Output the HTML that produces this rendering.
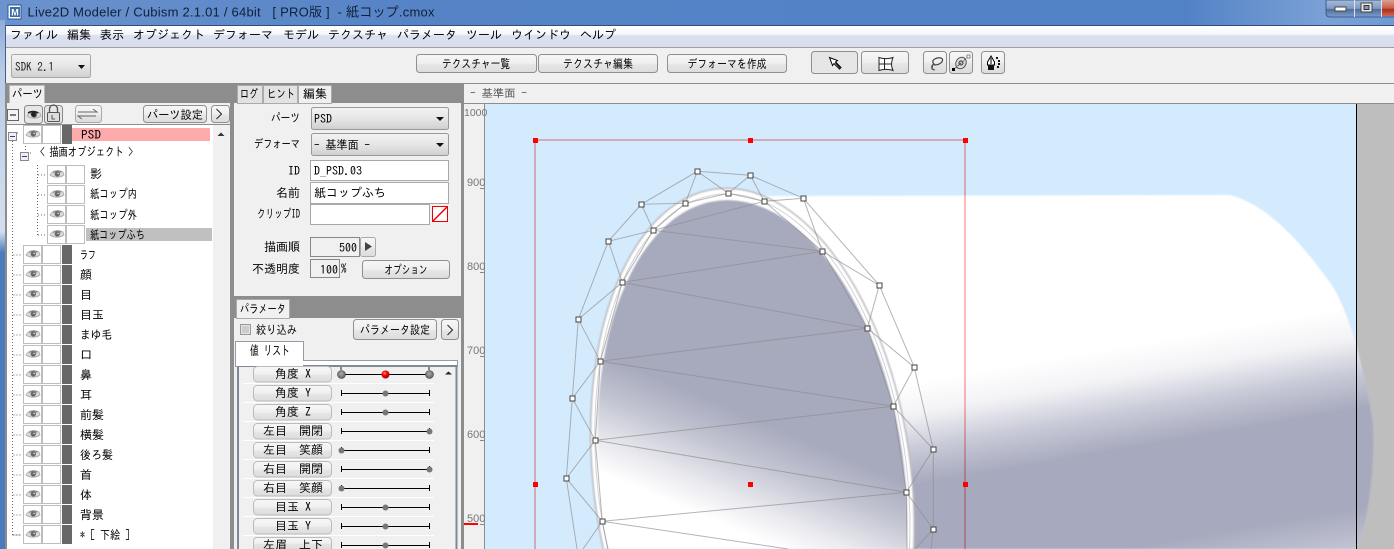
<!DOCTYPE html>
<html><head><meta charset="utf-8"><title>Live2D Modeler</title>
<style>
html,body{margin:0;padding:0;width:1394px;height:549px;overflow:hidden;background:#f0f0f0}
svg{display:block}
text{font-family:"IPAGothic","Liberation Sans","Noto Sans CJK JP",sans-serif;font-size:12px;fill:#000;white-space:pre}
.ttl{font-family:"Liberation Sans","Noto Sans CJK JP",sans-serif;font-size:13px;fill:#10203a}
.m{text-anchor:middle}.e{text-anchor:end}
.c{shape-rendering:crispEdges}
.g{fill:#777;font-size:11px;font-family:"Liberation Sans",sans-serif}
</style></head><body>
<svg width="1394" height="549" viewBox="0 0 1394 549" xmlns="http://www.w3.org/2000/svg">
<defs>
<linearGradient id="tb" x1="0" y1="0" x2="1" y2="0"><stop offset="0" stop-color="#6c93cd"/><stop offset=".3" stop-color="#5583c6"/><stop offset=".85" stop-color="#5282c6"/><stop offset=".95" stop-color="#7ba1d6"/><stop offset="1" stop-color="#7199d2"/></linearGradient>
<linearGradient id="side" x1="0" y1="0" x2="0" y2="1"><stop offset="0" stop-color="#8fadd8"/><stop offset=".1" stop-color="#b9cce6"/><stop offset=".4" stop-color="#d3dfef"/><stop offset=".44" stop-color="#4a7bbd"/><stop offset="1" stop-color="#4a7bbf"/></linearGradient>
<linearGradient id="mn" x1="0" y1="0" x2="0" y2="1"><stop offset="0" stop-color="#fff"/><stop offset=".4" stop-color="#f4f6fb"/><stop offset=".45" stop-color="#dce1f1"/><stop offset="1" stop-color="#d8ddee"/></linearGradient>
<linearGradient id="bt" x1="0" y1="0" x2="0" y2="1"><stop offset="0" stop-color="#f7f7f7"/><stop offset=".5" stop-color="#efefef"/><stop offset=".55" stop-color="#e6e6e6"/><stop offset="1" stop-color="#dcdcdc"/></linearGradient>
<linearGradient id="sel" x1="0" y1="0" x2="0" y2="1"><stop offset="0" stop-color="#f3f3f3"/><stop offset=".5" stop-color="#e6e6e6"/><stop offset="1" stop-color="#cfcfcf"/></linearGradient>
<linearGradient id="wb" x1="0" y1="0" x2="0" y2="1"><stop offset="0" stop-color="#a9bcd8"/><stop offset=".5" stop-color="#7f9ac4"/><stop offset=".55" stop-color="#4f6d9c"/><stop offset="1" stop-color="#7d9fcc"/></linearGradient>
<linearGradient id="wr" x1="0" y1="0" x2="0" y2="1"><stop offset="0" stop-color="#dba08f"/><stop offset=".5" stop-color="#c9604b"/><stop offset=".6" stop-color="#b02a1a"/><stop offset="1" stop-color="#c96a55"/></linearGradient>
<linearGradient id="body" gradientUnits="userSpaceOnUse" x1="1000" y1="367" x2="1044" y2="623"><stop offset="0" stop-color="#fff"/><stop offset=".12" stop-color="#f3f3f6"/><stop offset=".25" stop-color="#c9cbd8"/><stop offset=".39" stop-color="#a7aabe"/><stop offset=".77" stop-color="#a7aabe"/><stop offset="1" stop-color="#d0d2de"/></linearGradient>
<linearGradient id="inner" gradientUnits="userSpaceOnUse" x1="640" y1="370" x2="597" y2="471" gradientTransform="matrix(1 0 -0.089 1 -709.68 -480)"><stop offset="0" stop-color="#a7aabd"/><stop offset=".35" stop-color="#c2c4d1"/><stop offset=".75" stop-color="#ebebf0"/><stop offset="1" stop-color="#fff"/></linearGradient>
<radialGradient id="rk" cx=".4" cy=".35" r=".7"><stop offset="0" stop-color="#ff9a9a"/><stop offset=".4" stop-color="#f00"/><stop offset="1" stop-color="#900"/></radialGradient>
<radialGradient id="gk" cx=".45" cy=".4" r=".7"><stop offset="0" stop-color="#aaa"/><stop offset="1" stop-color="#555"/></radialGradient>
<filter id="bl" x="-5%" y="-5%" width="110%" height="110%"><feGaussianBlur stdDeviation=".8"/></filter>
<g id="eye"><path d="M1 6C3 2 8 0 14 3L15 6C11 9 5 9 1 6Z" fill="#d8d8d8" stroke="#aaa" stroke-width=".8"/><path d="M4 3C7 1 10 1 13 3L10 4C8 3 6 3 4 4Z" fill="#8a8a8a"/><circle cx="8.3" cy="5" r="2.6" fill="#666"/><circle cx="9" cy="4.4" r=".8" fill="#ddd"/></g>
<g id="cells"><rect class="c" x=".5" y=".5" width="18" height="18" fill="#fff" stroke="#bdbdbd"/><rect class="c" x="19.5" y=".5" width="18" height="18" fill="#fff" stroke="#bdbdbd"/><use href="#eye" x="2" y="4"/></g>
<g id="top"><use href="#cells" x="23"/><rect class="c" x="62" y="0" width="10" height="19" fill="#686868"/><path d="M13.5 10h8" stroke="#666" stroke-dasharray="1 2" class="c"/></g>
<g id="kid"><use href="#cells" x="47"/><path d="M38 10h8" stroke="#666" stroke-dasharray="1 2" class="c"/></g>
<g id="tr"><path class="c" d="M341.5 -3v6M429.5 -3v6M341 .5h89" stroke="#000" fill="none"/></g>
<g id="kn"><circle r="3" fill="#777"/></g>
<g id="hd"><rect class="c" x="-2.5" y="-2.5" width="5" height="5" fill="#fff" stroke="#444"/></g>
</defs>

<!-- window frame -->
<rect width="1394" height="26" fill="url(#tb)" class="c"/>
<rect y="20" width="5" height="529" fill="url(#side)" class="c"/>
<rect x="5" y="25" width="1389" height="1" fill="#2d4f80" class="c"/>
<rect x="5" y="26" width="1389" height="21" fill="url(#mn)" class="c"/>
<rect x="5" y="47" width="1389" height="1" fill="#a0a0a0" class="c"/>
<rect x="5" y="48" width="1389" height="35" fill="#f0f0f0" class="c"/>
<rect x="5" y="25" width="1" height="524" fill="#3f5f8f" class="c"/>

<!-- title -->
<rect x="8" y="5" width="13" height="14" fill="#fff" stroke="#2b5797" class="c"/>
<rect x="10" y="7" width="10" height="10" fill="#3a6ea8" class="c"/>
<text x="15" y="15.5" class="m" style="font-size:9px;font-weight:bold;font-family:'Liberation Sans';fill:#fff">M</text>
<text class="ttl" x="27.5" y="16.5" textLength="407" lengthAdjust="spacing">Live2D Modeler / Cubism 2.1.01 / 64bit   [ PRO版 ]  - 紙コップ.cmox</text>
<!-- window buttons -->
<path d="M1326 0V13Q1326 17 1330 17H1394V0Z" fill="url(#wb)" stroke="#3d5f92"/>
<rect x="1382" y="0" width="12" height="16" fill="url(#wr)" class="c"/>
<path class="c" d="M1354.5 0V17M1381.5 0V17" stroke="#d8e2f0"/>
<rect x="1335" y="7" width="11" height="4" fill="#fff" stroke="#444" stroke-width=".6" class="c"/>
<rect x="1361" y="3" width="11" height="9" fill="#e8e8e8" stroke="#444" stroke-width=".6" class="c"/>
<rect x="1364" y="5.5" width="5" height="4" fill="#7f9ac4" stroke="#333" stroke-width=".6" class="c"/>

<!-- menu -->
<g>
<text x="10" y="39">ファイル</text><text x="67" y="39">編集</text><text x="100" y="39">表示</text><text x="133" y="39">オブジェクト</text><text x="213" y="39">デフォーマ</text><text x="283" y="39">モデル</text><text x="328" y="39">テクスチャ</text><text x="397" y="39">パラメータ</text><text x="466" y="39">ツール</text><text x="511" y="39">ウインドウ</text><text x="580" y="39">ヘルプ</text>
</g>

<!-- toolbar -->
<rect class="c" x="11.5" y="54.5" width="79" height="23" rx="2" fill="url(#sel)" stroke="#a8a8a8"/>
<text x="15" y="71" textLength="39" lengthAdjust="spacingAndGlyphs" style="fill:#222">SDK 2.1</text><path d="M78 65h7l-3.500 4z" fill="#111"/>
<g fill="url(#bt)" stroke="#8f8f8f">
<rect x="416.500" y="54.500" width="120" height="18" rx="3"/><rect x="538.500" y="54.500" width="119" height="18" rx="3"/><rect x="667.500" y="54.500" width="119" height="18" rx="3"/>
<rect x="811.500" y="51.500" width="46" height="22" rx="3" fill="#e6e6e6"/><rect x="861.500" y="51.500" width="47" height="22" rx="3"/>
<rect x="923.500" y="51.500" width="23" height="22" rx="3"/><rect x="949.500" y="51.500" width="23" height="22" rx="3"/><rect x="981.500" y="51.500" width="23" height="22" rx="3"/>
</g>
<text x="476" y="68" class="m" textLength="68" lengthAdjust="spacingAndGlyphs">テクスチャ一覧</text><text x="598" y="68" class="m" textLength="70" lengthAdjust="spacingAndGlyphs">テクスチャ編集</text><text x="727" y="68" class="m" textLength="79" lengthAdjust="spacingAndGlyphs">デフォーマを作成</text>
<path d="M829.500 57.500l3 8 1.500-2 5.500 5.500 1.500-1.500-5.500-5.500 2-1.500z" fill="#fff" stroke="#000"/><path d="M835 63l4.500 5 1-1-4.500-5z" fill="#000"/>
<path d="M879 57.500C883 59 889 59 893 57.500C891 63 891 66 893 70.500C889 69 883 69 879 70.500ZM884.500 58.500V69.500M879 64H892" fill="#fff" stroke="#222"/>
<path d="M934 70C930 68 932 65 934 64C930 60 937 57 941 58C945 60 941 65 934 65" fill="none" stroke="#444" stroke-width="1.200"/><path d="M933 64l-1 5 3 1" fill="none" stroke="#555"/>
<ellipse cx="961" cy="63" rx="5" ry="6" transform="rotate(30 961 63)" fill="#ddd" stroke="#555"/><circle cx="961" cy="63" r="2" fill="none" stroke="#333"/><path d="M953 70L969 56" stroke="#555" fill="none" stroke-dasharray="2 1"/><rect x="952" y="68" width="3" height="3" fill="#000"/><rect x="967" y="55" width="3" height="3" fill="#fff" stroke="#444" stroke-width=".6"/>
<path d="M991 56l3.500 6v3h-7v-3zM991 58v6" fill="#fff" stroke="#000"/><rect x="988" y="65" width="6" height="5" fill="#111"/><path class="c" d="M997 57v2M999 60v2M999 63v2M998 66v2" stroke="#111" stroke-width="2"/>

<!-- left panel -->
<rect x="5" y="83" width="1389" height="1" fill="#8d8d8d" class="c"/>
<rect x="5" y="84" width="229" height="19" fill="#8d8d8d" class="c"/>
<rect x="6" y="103" width="224" height="446" fill="#f0f0f0" class="c"/>
<rect x="5" y="84" width="2" height="465" fill="#8c8c8c" class="c"/>
<rect x="230" y="84" width="4" height="465" fill="#8d8d8d" class="c"/>
<path class="c" d="M9.500 103V85.500H44.500V103" fill="#f0f0f0" stroke="#bbb"/>
<text x="12" y="98" textLength="31" lengthAdjust="spacingAndGlyphs">パーツ</text>
<rect class="c" x="7.500" y="109.500" width="11" height="11" fill="#f4f4f4" stroke="#666"/><path class="c" d="M10 115h6" stroke="#000"/>
<rect x="24.500" y="105.500" width="18" height="18" rx="3" fill="#e6e6e6" stroke="#888"/><use href="#eye" x="26" y="110"/><path d="M28 113c3-2 7-2 10 0" stroke="#222" stroke-width="1.500" fill="none"/><circle cx="33.500" cy="114.500" r="2.500" fill="#222"/>
<rect x="44.500" y="105.500" width="18" height="18" rx="3" fill="#e6e6e6" stroke="#888"/><rect x="47.500" y="112.500" width="12" height="9" rx="1" fill="#ddd" stroke="#555"/><path d="M49.500 112v-3a4 4 0 0 1 8 0v3" fill="none" stroke="#555" stroke-width="1.300"/><path class="c" d="M52 115v4h3" stroke="#555" fill="none"/>
<rect x="75.500" y="105.500" width="26" height="17" rx="3" fill="url(#bt)" stroke="#aaa"/><path d="M78 112h19l-4-3M96 116H78l4 3" fill="none" stroke="#666"/>
<rect x="143.500" y="105.500" width="63" height="17" rx="3" fill="url(#bt)" stroke="#8f8f8f"/><text x="175" y="119" class="m" textLength="56" lengthAdjust="spacingAndGlyphs">パーツ設定</text>
<rect x="211.500" y="105.500" width="18" height="17" rx="3" fill="url(#bt)" stroke="#8f8f8f"/><path d="M216.500 109l5 5-5 5" fill="none" stroke="#222"/>
<rect x="7" y="124" width="206" height="425" fill="#fff" class="c"/>
<rect x="7" y="124" width="223" height="1" fill="#8d8d8d" class="c"/>

<!-- tree lines -->
<path class="c" d="M12.500 141V535M25.500 143V152M37.500 165V235" stroke="#666" stroke-dasharray="1 2" fill="none"/>
<path class="c" d="M12.500 535h9M17 133h2M30 153h3" stroke="#666" stroke-dasharray="1 2" fill="none"/>
<rect class="c" x="8.500" y="132.500" width="8" height="8" fill="#eef0f6" stroke="#888"/><path class="c" d="M10 136.500h5" stroke="#2a3f9f"/>
<rect class="c" x="20.500" y="152.500" width="8" height="8" fill="#eef0f6" stroke="#888"/><path class="c" d="M22 156.500h5" stroke="#2a3f9f"/>

<!-- rows -->
<use href="#cells" x="23" y="125"/><rect class="c" x="62" y="125" width="10" height="19" fill="#686868"/>
<rect class="c" x="72" y="128" width="138" height="13" fill="#ffaaaa"/><text x="81" y="139" textLength="20" lengthAdjust="spacingAndGlyphs">PSD</text>
<text x="40" y="156" textLength="93" lengthAdjust="spacingAndGlyphs">&lt; 描画オブジェクト &gt;</text>
<use href="#kid" y="165"/><text x="90" y="178">影</text>
<use href="#kid" y="185"/><text x="90" y="198" textLength="47" lengthAdjust="spacingAndGlyphs">紙コップ内</text>
<use href="#kid" y="205"/><text x="90" y="219" textLength="47" lengthAdjust="spacingAndGlyphs">紙コップ外</text>
<rect class="c" x="86" y="228" width="126" height="13" fill="#c0c0c0"/>
<use href="#kid" y="225"/><text x="90" y="239" textLength="55" lengthAdjust="spacingAndGlyphs">紙コップふち</text>
<use href="#top" y="245"/><text x="80" y="259" textLength="16" lengthAdjust="spacingAndGlyphs">ラフ</text>
<use href="#top" y="265"/><text x="80" y="279">顔</text>
<use href="#top" y="285"/><text x="80" y="299">目</text>
<use href="#top" y="305"/><text x="80" y="319">目玉</text>
<use href="#top" y="325"/><text x="80" y="339" textLength="32" lengthAdjust="spacingAndGlyphs">まゆ毛</text>
<use href="#top" y="345"/><text x="80" y="359">口</text>
<use href="#top" y="365"/><text x="80" y="379">鼻</text>
<use href="#top" y="385"/><text x="80" y="399">耳</text>
<use href="#top" y="405"/><text x="80" y="419">前髪</text>
<use href="#top" y="425"/><text x="80" y="439">横髪</text>
<use href="#top" y="445"/><text x="80" y="459" textLength="33" lengthAdjust="spacingAndGlyphs">後ろ髪</text>
<use href="#top" y="465"/><text x="80" y="479">首</text>
<use href="#top" y="485"/><text x="80" y="499">体</text>
<use href="#top" y="505"/><text x="80" y="519">背景</text>
<use href="#top" y="525"/><text x="80" y="539" textLength="50" lengthAdjust="spacingAndGlyphs">* [ 下絵 ]</text>
<rect x="213" y="125" width="17" height="424" fill="#f0f0f0" class="c"/>
<path d="M217.500 136l3.500-3.500 3.500 3.500z" fill="#333"/>

<!-- centre panel -->
<rect x="234" y="84" width="230" height="19" fill="#8d8d8d" class="c"/>
<rect x="234" y="103" width="227" height="193" fill="#f0f0f0" class="c"/>
<rect x="234" y="296" width="227" height="22" fill="#8d8d8d" class="c"/>
<rect x="234" y="318" width="227" height="231" fill="#f0f0f0" class="c"/>
<g class="c" stroke="#aaa"><rect x="237.500" y="85.500" width="25" height="18" fill="#e2e2e2"/><rect x="263.500" y="85.500" width="34" height="18" fill="#e2e2e2"/><rect x="298.500" y="85.500" width="33" height="18" fill="#f0f0f0"/><rect x="236.500" y="299.500" width="53" height="19" fill="#f0f0f0"/></g>
<text x="240" y="98" textLength="18" lengthAdjust="spacingAndGlyphs">ログ</text><text x="267" y="98" textLength="28" lengthAdjust="spacingAndGlyphs">ヒント</text><text x="303" y="98">編集</text><text x="240" y="313" textLength="46" lengthAdjust="spacingAndGlyphs">パラメータ</text>

<text x="300" y="122" class="e" textLength="29" lengthAdjust="spacingAndGlyphs">パーツ</text>
<rect x="311.500" y="107.500" width="137" height="22" rx="2" fill="url(#sel)" stroke="#999"/><text x="314" y="123">PSD</text><path d="M436 117h8l-4 4z" fill="#111"/>
<text x="300" y="148" class="e" textLength="46" lengthAdjust="spacingAndGlyphs">デフォーマ</text>
<rect x="311.500" y="133.500" width="137" height="22" rx="2" fill="url(#sel)" stroke="#999"/><text x="314" y="149" textLength="56" lengthAdjust="spacingAndGlyphs">- 基準面 -</text><path d="M436 143h8l-4 4z" fill="#111"/>
<g class="c" fill="#fff" stroke="#a8a8a8"><rect x="310.500" y="160.500" width="138" height="20"/><rect x="310.500" y="182.500" width="138" height="21"/><rect x="310.500" y="204.500" width="119" height="20"/></g>
<text x="300" y="175" class="e">ID</text><text x="314" y="175">D_PSD.03</text>
<text x="300" y="197" class="e">名前</text><text x="314" y="197">紙コップふち</text>
<text x="300" y="218" class="e" textLength="43" lengthAdjust="spacingAndGlyphs">クリップID</text>
<rect class="c" x="432.500" y="206.500" width="15" height="15" fill="#fff" stroke="#e00"/><path d="M433 221L447 207" stroke="#e00" stroke-width="1.500"/>
<text x="300" y="251" class="e">描画順</text>
<rect class="c" x="310.500" y="237.500" width="49" height="19" fill="#f0f0f0" stroke="#888"/><text x="357" y="252" class="e">500</text>
<rect x="360.500" y="237.500" width="15" height="19" rx="2" fill="url(#bt)" stroke="#aaa"/><path d="M365 242v9l7-4.500z" fill="#444"/>
<text x="300" y="273" class="e">不透明度</text>
<rect class="c" x="310.500" y="259.500" width="29" height="18" fill="#f0f0f0" stroke="#888"/><text x="338" y="274" class="e">100</text><text x="341" y="272" style="font-size:11px">%</text>
<rect x="362.500" y="260.500" width="87" height="18" rx="3" fill="url(#bt)" stroke="#8f8f8f"/><text x="406" y="274" class="m" textLength="43" lengthAdjust="spacingAndGlyphs">オプション</text>

<!-- params -->
<rect class="c" x="240.500" y="324.500" width="10" height="10" fill="#e4e4e4" stroke="#999"/><rect class="c" x="242" y="326" width="7" height="7" fill="#ccc"/>
<text x="256" y="334" textLength="41" lengthAdjust="spacingAndGlyphs">絞り込み</text>
<rect x="353.500" y="319.500" width="83" height="20" rx="3" fill="url(#bt)" stroke="#8f8f8f"/><text x="395" y="334" class="m" textLength="70" lengthAdjust="spacingAndGlyphs">パラメータ設定</text>
<rect x="441.500" y="319.500" width="17" height="20" rx="3" fill="url(#bt)" stroke="#8f8f8f"/><path d="M447.500 325l5 5-5 5" fill="none" stroke="#222"/>
<rect class="c" x="235.500" y="360.500" width="222" height="6" fill="#fff" stroke="#99a"/>
<path class="c" d="M238 549V366H456.500V549" fill="#f0f0f0" stroke="#7f8a96" stroke-width="2"/>
<path class="c" d="M235.500 361V341.500H303.500V361" fill="#fff" stroke="#99a"/><rect class="c" x="236" y="342" width="67" height="24" fill="#fff"/>
<text x="270" y="355" class="m" textLength="40" lengthAdjust="spacingAndGlyphs" style="font-size:13px">値 リスト</text>
<path d="M445 374.500l3.500-3 3.500 3z" fill="#222"/>
<path class="c" d="M243 383.500H434M243 402.500H434M243 421.500H434M243 440.500H434M243 459.500H434M243 478.500H434M243 497.500H434M243 516.500H434M243 535.500H434" stroke="#fff"/>
<g fill="url(#bt)" stroke="#bbb">
<rect x="253.500" y="366.500" width="78" height="15.500" rx="4"/><rect x="253.500" y="385.500" width="78" height="15.500" rx="4"/><rect x="253.500" y="404.500" width="78" height="15.500" rx="4"/><rect x="253.500" y="423.500" width="78" height="15.500" rx="4"/><rect x="253.500" y="442.500" width="78" height="15.500" rx="4"/><rect x="253.500" y="461.500" width="78" height="15.500" rx="4"/><rect x="253.500" y="480.500" width="78" height="15.500" rx="4"/><rect x="253.500" y="499.500" width="78" height="15.500" rx="4"/><rect x="253.500" y="518.500" width="78" height="15.500" rx="4"/><path d="M253.500 549V541.500Q253.500 537.500 257.500 537.500H327.500Q331.500 537.500 331.500 541.500V549"/>
</g>
<text x="293" y="378" class="m">角度 X</text><text x="293" y="397" class="m">角度 Y</text><text x="293" y="416" class="m">角度 Z</text><text x="293" y="435" class="m">左目　開閉</text><text x="293" y="454" class="m">左目　笑顔</text><text x="293" y="473" class="m">右目　開閉</text><text x="293" y="492" class="m">右目　笑顔</text><text x="293" y="511" class="m">目玉 X</text><text x="293" y="530" class="m">目玉 Y</text><text x="293" y="549" class="m">左眉　上下</text>
<path class="c" d="M341 374.500h89" stroke="#000"/><path class="c" d="M341 366v4M429 366v4" stroke="#888" stroke-width="2"/>
<circle cx="341.500" cy="374.500" r="4" fill="url(#gk)" stroke="#444" stroke-width=".6"/><circle cx="429.500" cy="374.500" r="4" fill="url(#gk)" stroke="#444" stroke-width=".6"/><circle cx="385.500" cy="374.500" r="4" fill="url(#rk)"/>
<use href="#tr" y="393"/><use href="#kn" x="385.500" y="393.500"/>
<use href="#tr" y="412"/><use href="#kn" x="385.500" y="412.500"/>
<use href="#tr" y="431"/><use href="#kn" x="429.500" y="431.500"/>
<use href="#tr" y="450"/><use href="#kn" x="341.500" y="450.500"/>
<use href="#tr" y="469"/><use href="#kn" x="429.500" y="469.500"/>
<use href="#tr" y="488"/><use href="#kn" x="341.500" y="488.500"/>
<use href="#tr" y="507"/><use href="#kn" x="385.500" y="507.500"/>
<use href="#tr" y="526"/><use href="#kn" x="385.500" y="526.500"/>
<use href="#tr" y="545"/><use href="#kn" x="385.500" y="545.500"/>

<!-- canvas -->
<rect x="461" y="84" width="933" height="19" fill="#f0f0f0" class="c"/>
<rect x="461" y="84" width="3" height="465" fill="#8d8d8d" class="c"/>
<rect x="464" y="103" width="930" height="1" fill="#8d8d8d" class="c"/>
<text x="470" y="97" textLength="57" lengthAdjust="spacingAndGlyphs" style="font-size:11px;fill:#555">- 基準面 -</text>
<rect x="464" y="104" width="20" height="445" fill="#f0f0f0" class="c"/>
<rect x="484" y="104" width="1" height="445" fill="#8d8d8d" class="c"/>
<rect x="485" y="104" width="871" height="445" fill="#d4ebfe" class="c"/>
<rect x="1357" y="104" width="37" height="445" fill="#bebebe" class="c"/>
<text x="464" y="116" class="g" style="font-size:10.500px">1000</text><text x="467" y="186" class="g">900</text><text x="467" y="270" class="g">800</text><text x="467" y="354" class="g">700</text><text x="467" y="438" class="g">600</text><text x="467" y="522" class="g">500</text>
<path class="c" d="M480 188.500h4M480 272.500h4M480 356.500h4M480 440.500h4M480 524.500h4" stroke="#888"/>
<rect x="464" y="523" width="14" height="2" fill="#f00" class="c"/>

<path d="M760 196L1230 195C1267 205 1300 240 1333 287C1350 315 1365 370 1373 425C1375 470 1368 520 1357 549L760 549Z" fill="url(#body)" filter="url(#bl)"/>
<rect x="1356" y="104" width="1" height="445" fill="#000" class="c"/>

<g transform="translate(752.400 480) skewX(5.090)">
<path d="M-155.970 69A160.500 292.500 0 1 1 155.970 69Z" fill="#b8b8bd" filter="url(#bl)"/>
<path d="M-154.470 69A159 291 0 1 1 154.470 69Z" fill="#fff" filter="url(#bl)"/>
<path d="M-150.900 69A155.500 286 0 1 1 150.900 69" fill="none" stroke="#d2d2d6" stroke-width="1"/>
<path d="M-148.300 69A153 280 0 1 1 148.300 69Z" fill="url(#inner)" filter="url(#bl)"/>
</g>

<!-- selection rect -->
<path d="M535 140H965V549M535 140V549" fill="none" stroke="#ffb8bc" stroke-width="2" style="mix-blend-mode:multiply" class="c"/>
<g fill="#f00" class="c"><rect x="533" y="138" width="5" height="5"/><rect x="748" y="138" width="5" height="5"/><rect x="963" y="138" width="5" height="5"/><rect x="533" y="482" width="5" height="5"/><rect x="748" y="482" width="5" height="5"/><rect x="963" y="482" width="5" height="5"/></g>

<!-- mesh -->
<g fill="none" stroke="#8c8c8c" stroke-opacity=".65" stroke-width="1">
<path d="M577 549L566.300 478.300L572.300 398.300L578.300 319.300L608.300 241.300L641.300 204.300L697.300 171.300L750.300 175.300L803.300 198.300L879.300 285.300L914.300 367.300L933.300 449.300L933.300 529.300L931 549"/>
<path d="M608 549L602.300 521.300L595.300 440.300L600.300 361.300L622.300 282.300L653.300 230.300L685.300 203.300L728.300 193.300L764.300 201.300L822.300 251.300L867.300 328.300L893.300 406.300L906.300 492.300L907 549"/>
<path d="M764.300 201.300L653.300 230.300L822.300 251.300L622.300 282.300L867.300 328.300L600.300 361.300L893.300 406.300L595.300 440.300L906.300 492.300L602.300 521.300L788 549"/>
<path d="M685.300 203.300L697.300 171.300L728.300 193.300L750.300 175.300L764.300 201.300L803.300 198.300L822.300 251.300L879.300 285.300L867.300 328.300L914.300 367.300L893.300 406.300L933.300 449.300L906.300 492.300L933.300 529.300L915 549"/>
<path d="M685.300 203.300L641.300 204.300L653.300 230.300L608.300 241.300L622.300 282.300L578.300 319.300L600.300 361.300L572.300 398.300L595.300 440.300L566.300 478.300L602.300 521.300L583 549"/>
</g>
<g>
<use href="#hd" x="697.500" y="171.500"/><use href="#hd" x="750.500" y="175.500"/><use href="#hd" x="803.500" y="198.500"/><use href="#hd" x="879.500" y="285.500"/><use href="#hd" x="914.500" y="367.500"/><use href="#hd" x="933.500" y="449.500"/><use href="#hd" x="933.500" y="529.500"/><use href="#hd" x="641.500" y="204.500"/><use href="#hd" x="608.500" y="241.500"/><use href="#hd" x="578.500" y="319.500"/><use href="#hd" x="572.500" y="398.500"/><use href="#hd" x="566.500" y="478.500"/>
<use href="#hd" x="728.500" y="193.500"/><use href="#hd" x="685.500" y="203.500"/><use href="#hd" x="764.500" y="201.500"/><use href="#hd" x="653.500" y="230.500"/><use href="#hd" x="822.500" y="251.500"/><use href="#hd" x="622.500" y="282.500"/><use href="#hd" x="867.500" y="328.500"/><use href="#hd" x="600.500" y="361.500"/><use href="#hd" x="893.500" y="406.500"/><use href="#hd" x="595.500" y="440.500"/><use href="#hd" x="906.500" y="492.500"/><use href="#hd" x="602.500" y="521.500"/>
</g>
</svg>
</body></html>
